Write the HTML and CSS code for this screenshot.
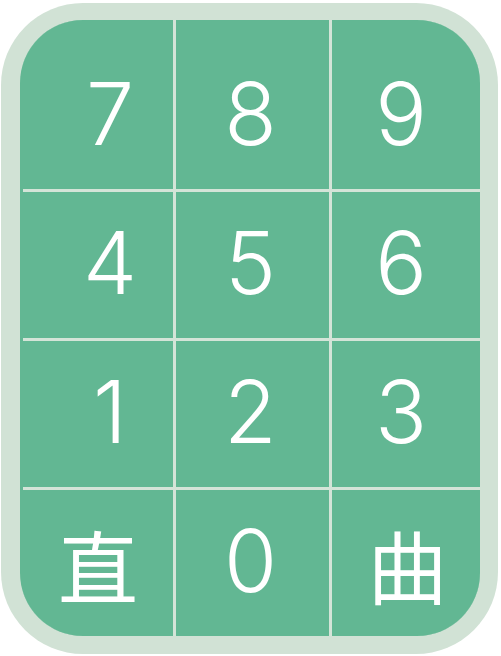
FILE: index.html
```html
<!DOCTYPE html>
<html lang="zh">
<head>
<meta charset="utf-8">
<title>Keypad</title>
<link rel="stylesheet" href="styles.css">
</head>
<body>
<div class="frame">
  <div class="panel">
    <div class="pad">
      <div class="key top key-l">7</div>
      <div class="key top key-m">8</div>
      <div class="key top key-r">9</div>
      <div class="key key-l">4</div>
      <div class="key key-m">5</div>
      <div class="key key-r">6</div>
      <div class="key key-l">1</div>
      <div class="key key-m">2</div>
      <div class="key key-r">3</div>
      <div class="key cjk">直</div>
      <div class="key key-m">0</div>
      <div class="key cjk">曲</div>
    </div>
  </div>
</div>
</body>
</html>
```
FILE: styles.css
```css
html, body {
  margin: 0;
  padding: 0;
  background: #ffffff;
}
body {
  width: 501px;
  height: 656px;
  overflow: hidden;
}
.frame {
  margin: 3px 3px 2px 1px;
  width: 497px;
  height: 651px;
  box-sizing: border-box;
  padding: 17px 18px 18px 19px;
  background: #d1e2d5;
  border-radius: 82px;
}
.panel {
  width: 460px;
  height: 616px;
  background: #62b793;
  border-radius: 63px;
  overflow: hidden;
  padding-left: 3px;
  box-sizing: border-box;
}
.pad {
  height: 100%;
  display: grid;
  grid-template-columns: 150px 153px 1fr;
  grid-template-rows: 169px 146px 146px 1fr;
  gap: 3px;
  background: #d4e4d8;
  margin-right: -3px;
}
.key {
  background: #62b793;
  color: #ffffff;
  display: flex;
  align-items: center;
  justify-content: center;
  font-family: "Inter", "Lato", "Liberation Sans", sans-serif;
  font-weight: 300;
  font-size: 86px;
  line-height: 1;
  box-sizing: border-box;
  padding-bottom: 4px;
}
.top {
  padding-top: 22px;
}
.key-l {
  padding-left: 24px;
}
.key-m {
  padding-right: 4px;
}
.key-r {
  padding-right: 13px;
}
.cjk {
  font-family: "Noto Sans CJK SC", "Noto Sans CJK JP", sans-serif;
  font-weight: 400;
  font-size: 80px;
  padding-bottom: 0;
}
```
